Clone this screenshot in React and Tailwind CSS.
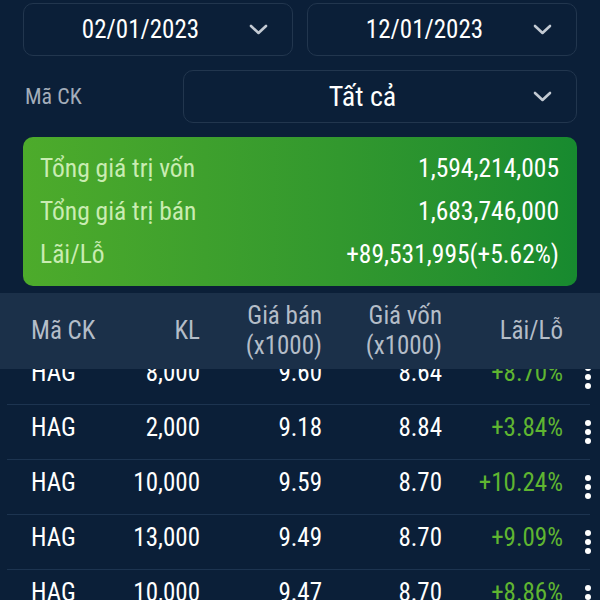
import React from "react";

const rows = [
  { code: "HAG", kl: "8,000", sell: "9.60", cost: "8.64", pl: "+8.70%" },
  { code: "HAG", kl: "2,000", sell: "9.18", cost: "8.84", pl: "+3.84%" },
  { code: "HAG", kl: "10,000", sell: "9.59", cost: "8.70", pl: "+10.24%" },
  { code: "HAG", kl: "13,000", sell: "9.49", cost: "8.70", pl: "+9.09%" },
  { code: "HAG", kl: "10,000", sell: "9.47", cost: "8.70", pl: "+8.86%" },
];

function Chevron() {
  return (
    <svg width="19" height="11" viewBox="0 0 19 11" fill="none" className="shrink-0">
      <path d="M2 2l7.5 7 7.5-7" stroke="#c3cad3" strokeWidth="2.6" strokeLinecap="round" strokeLinejoin="round" />
    </svg>
  );
}

function Dots() {
  return (
    <svg width="8" height="26" viewBox="0 0 8 26" className="shrink-0">
      <circle cx="4" cy="4" r="3" fill="#ffffff" />
      <circle cx="4" cy="13" r="3" fill="#ffffff" />
      <circle cx="4" cy="22" r="3" fill="#ffffff" />
    </svg>
  );
}

function SelectBox({ value, className, textClass = "text-[25px]" }) {
  return (
    <div className={`flex h-[53px] items-center rounded-[10px] border border-[#22364e] pl-2 pr-[24px] ${className}`}>
      <span className={`flex-1 text-center text-white ${textClass}`}>{value}</span>
      <Chevron />
    </div>
  );
}

export default function App() {
  return (
    <div
      className="h-[600px] w-[600px] overflow-hidden bg-[#0b1f38] font-stretch-condensed"
      style={{ fontFamily: "Roboto, 'Liberation Sans', sans-serif" }}
    >
      {/* Filters */}
      <div className="px-[23px] pt-[3px]">
        <div className="flex gap-[14px]">
          <SelectBox value="02/01/2023" className="flex-1" />
          <SelectBox value="12/01/2023" className="flex-1" />
        </div>
        <div className="mt-[14px] flex items-center">
          <span className="w-[160px] pl-[2px] text-[22px] text-[#a3adba]">Mã CK</span>
          <SelectBox value="Tất cả" className="flex-1" textClass="text-[28px]" />
        </div>

        {/* Summary card */}
        <div className="mt-[14px] rounded-[10px] bg-gradient-to-r from-[#4dab2b] to-[#178a2f] py-[10px] pl-[17px] pr-[18px] text-[25.5px]">
          <div className="flex h-[43px] items-center justify-between">
            <span className="text-[#c9ecb2]">Tổng giá trị vốn</span>
            <span className="text-white">1,594,214,005</span>
          </div>
          <div className="flex h-[43px] items-center justify-between">
            <span className="text-[#c9ecb2]">Tổng giá trị bán</span>
            <span className="text-white">1,683,746,000</span>
          </div>
          <div className="flex h-[43px] items-center justify-between">
            <span className="text-[#c9ecb2]">Lãi/Lỗ</span>
            <span className="text-white">+89,531,995(+5.62%)</span>
          </div>
        </div>
      </div>

      {/* Table header */}
      <div className="relative z-10 mt-[7px] flex h-[76px] items-center bg-[#1b3049] pl-[31px] text-[25px] leading-[30px] text-[#b4bdc8]">
        <div className="w-[89px]">Mã CK</div>
        <div className="w-[80px] text-right">KL</div>
        <div className="w-[122px] text-right">Giá bán<br />(x1000)</div>
        <div className="w-[120px] text-right">Giá vốn<br />(x1000)</div>
        <div className="w-[121px] text-right">Lãi/Lỗ</div>
      </div>

      {/* Rows */}
      <div className="-mt-[19px]">
        {rows.map((r, i) => (
          <div key={i} className="ml-[7px] mr-[10px] flex h-[55px] items-center border-b border-[#1d3450] pb-[8px] pl-[24px] text-[25px] text-white">
            <div className="w-[89px]">{r.code}</div>
            <div className="w-[80px] text-right">{r.kl}</div>
            <div className="w-[122px] text-right">{r.sell}</div>
            <div className="w-[120px] text-right">{r.cost}</div>
            <div className="w-[121px] text-right text-[#5fb531]">{r.pl}</div>
            <div className="flex flex-1 justify-end -mr-[2px] pt-[8px]">
              <Dots />
            </div>
          </div>
        ))}
      </div>
    </div>
  );
}
